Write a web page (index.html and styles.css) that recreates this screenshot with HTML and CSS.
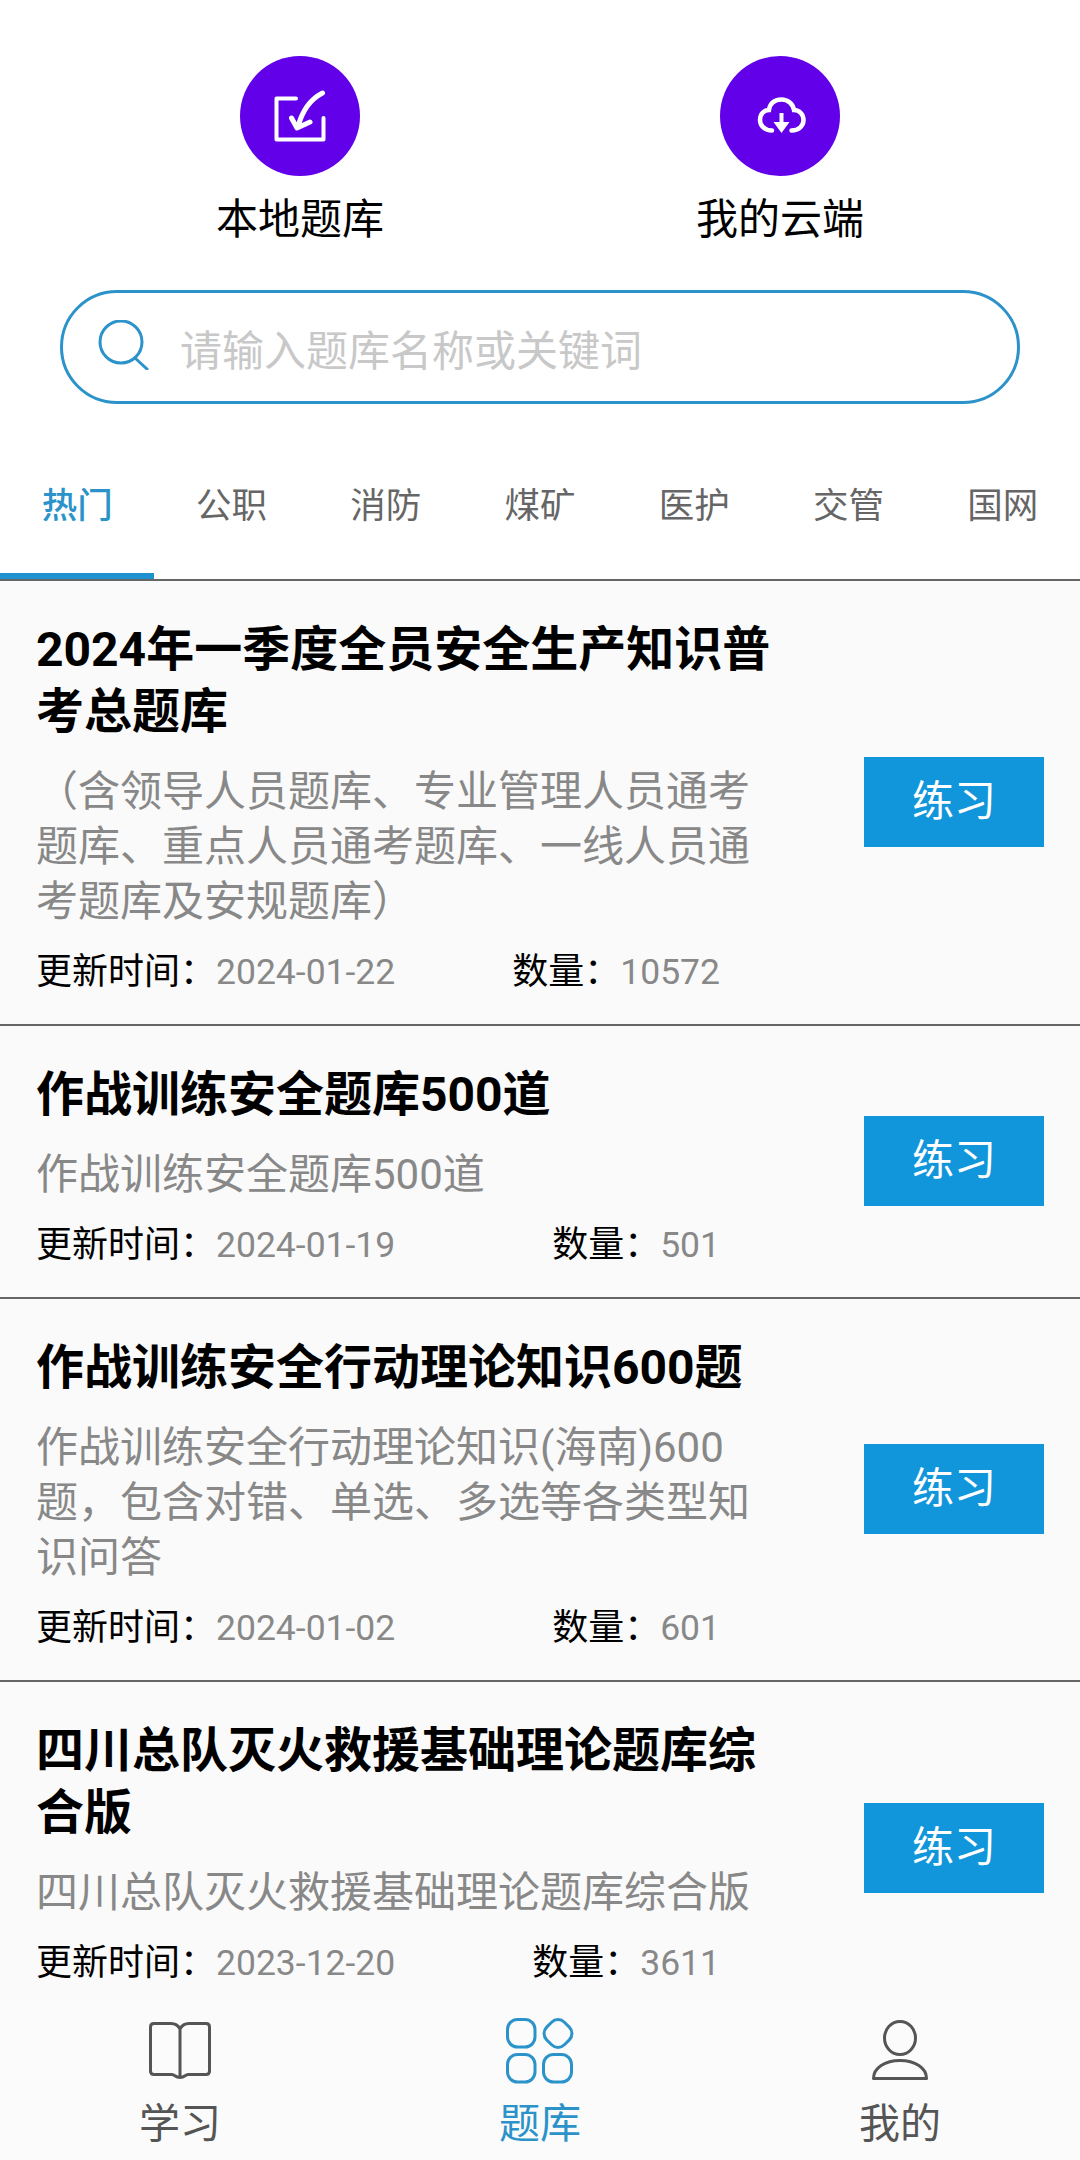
FILE: index.html
```html
<!DOCTYPE html>
<html lang="zh-CN">
<head>
    <meta name="viewport" content="width=device-width">
    <title>题库</title>
    <link rel="stylesheet" href="styles.css">
</head>
<body>
<div class="page">
    <div class="shortcuts">
        <div class="shortcut">
            <svg class="round-icon" viewBox="0 0 120 120">
                <circle cx="60" cy="60" r="60" fill="#6200ea"/>
                <path d="M56 42.5H36.5V83.5H83.5V62" fill="none" stroke="#fff" stroke-width="4" stroke-linejoin="round" stroke-linecap="round"/>
                <path d="M82.5 37C71 43 62 55 58 71M51.5 62L57 72L70 66" fill="none" stroke="#fff" stroke-width="5" stroke-linejoin="round" stroke-linecap="round"/>
            </svg>
            <div class="shortcut-name">本地题库</div>
        </div>
        <div class="shortcut">
            <svg class="round-icon" viewBox="0 0 120 120">
                <circle cx="60" cy="60" r="60" fill="#6200ea"/>
                <path d="M52 74.5C44 74.5 40 69 40 64C40 58 44 54 49 54C50 47 55 43.5 61.5 43.5C68 43.5 73 48 74 54C79.5 54 83.5 58.5 83.5 64C83.5 69.5 79 74.5 71.5 74.5" fill="none" stroke="#fff" stroke-width="4.5" stroke-linecap="round"/>
                <path d="M59.5 57H63.5V66H69.5L61.5 77L53.5 66H59.5Z" fill="#fff"/>
            </svg>
            <div class="shortcut-name">我的云端</div>
        </div>
    </div>

    <div class="search">
        <svg class="search-icon" viewBox="0 0 52 50">
            <circle cx="24" cy="22" r="21" fill="none" stroke="#2b93c9" stroke-width="3"/>
            <path d="M38 38L50 49" fill="none" stroke="#2b93c9" stroke-width="3" stroke-linecap="round"/>
        </svg>
        <span class="placeholder">请输入题库名称或关键词</span>
    </div>

    <div class="tabs">
        <div class="tab active">热门</div>
        <div class="tab">公职</div>
        <div class="tab">消防</div>
        <div class="tab">煤矿</div>
        <div class="tab">医护</div>
        <div class="tab">交管</div>
        <div class="tab">国网</div>
    </div>

    <div class="list">
        <div class="item">
            <div class="info">
                <div class="name">2024年一季度全员安全生产知识普考总题库</div>
                <div class="desc">（含领导人员题库、专业管理人员通考题库、重点人员通考题库、一线人员通考题库及安规题库）</div>
                <div class="meta">
                    <span>更新时间：<em>2024-01-22</em></span>
                    <span>数量：<em>10572</em></span>
                </div>
            </div>
            <div class="btn">练习</div>
        </div>
        <div class="item">
            <div class="info">
                <div class="name">作战训练安全题库500道</div>
                <div class="desc">作战训练安全题库500道</div>
                <div class="meta">
                    <span>更新时间：<em>2024-01-19</em></span>
                    <span>数量：<em>501</em></span>
                </div>
            </div>
            <div class="btn">练习</div>
        </div>
        <div class="item">
            <div class="info">
                <div class="name">作战训练安全行动理论知识600题</div>
                <div class="desc">作战训练安全行动理论知识(海南)600题，包含对错、单选、多选等各类型知识问答</div>
                <div class="meta">
                    <span>更新时间：<em>2024-01-02</em></span>
                    <span>数量：<em>601</em></span>
                </div>
            </div>
            <div class="btn">练习</div>
        </div>
        <div class="item">
            <div class="info">
                <div class="name">四川总队灭火救援基础理论题库综合版</div>
                <div class="desc">四川总队灭火救援基础理论题库综合版</div>
                <div class="meta">
                    <span>更新时间：<em>2023-12-20</em></span>
                    <span>数量：<em>3611</em></span>
                </div>
            </div>
            <div class="btn">练习</div>
        </div>
    </div>

    <div class="nav">
        <div class="nav-item">
            <svg class="nav-icon" viewBox="0 0 70 70">
                <path d="M35 13C33 9 30 7.5 26 7.5H9Q5.5 7.5 5.5 11V55Q5.5 58.5 9 58.5H27C30 58.5 30 61.5 35 61.5C40 61.5 40 58.5 43 58.5H61Q64.5 58.5 64.5 55V11Q64.5 7.5 61 7.5H44C40 7.5 37 9 35 13V61" fill="none" stroke="#555" stroke-width="3"/>
            </svg>
            <div>学习</div>
        </div>
        <div class="nav-item on">
            <svg class="nav-icon" viewBox="0 0 70 70">
                <rect x="2.5" y="3.5" width="27.5" height="27.5" rx="10" fill="none" stroke="#2b93c9" stroke-width="3"/>
                <rect x="40.5" y="5" width="25" height="25" rx="9" transform="rotate(45 53 17.5)" fill="none" stroke="#2b93c9" stroke-width="3"/>
                <rect x="2.5" y="38.5" width="27.5" height="27.5" rx="10" fill="none" stroke="#2b93c9" stroke-width="3"/>
                <rect x="38.5" y="38.5" width="28" height="27.5" rx="10" fill="none" stroke="#2b93c9" stroke-width="3"/>
            </svg>
            <div>题库</div>
        </div>
        <div class="nav-item">
            <svg class="nav-icon" viewBox="0 0 70 70">
                <ellipse cx="35" cy="22" rx="15.5" ry="16.5" fill="none" stroke="#555" stroke-width="3"/>
                <path d="M8.5 62.5C8.5 52 20 44.5 35 44.5C50 44.5 61.5 52 61.5 62.5Z" fill="none" stroke="#555" stroke-width="3" stroke-linejoin="round"/>
            </svg>
            <div>我的</div>
        </div>
    </div>
</div>
</body>
</html>
```

FILE: styles.css
```css
* { box-sizing: border-box; }
body {
    margin: 0;
    font-family: Roboto, "Noto Sans CJK SC", sans-serif;
    background: #fff;
}
em { font-style: normal; color: #888; }

.page {
    width: 1080px;
    height: 2160px;
    display: flex;
    flex-direction: column;
    overflow: hidden;
}

.shortcuts {
    display: flex;
    justify-content: space-around;
    padding: 56px 60px 0;
}
.shortcut { width: 240px; text-align: center; }
.round-icon { display: block; width: 120px; height: 120px; margin: 0 auto; }
.shortcut-name { font-size: 42px; line-height: 56px; margin-top: 16px; color: #000; }

.search {
    display: flex;
    align-items: center;
    margin: 42px 60px 0;
    height: 114px;
    padding-left: 34px;
    border: 3px solid #2b93c9;
    border-radius: 57px;
}
.search-icon { width: 52px; height: 50px; margin-top: -4px; }
.placeholder { font-size: 42px; color: #c8c8c8; margin-left: 31px; }

.tabs {
    display: flex;
    height: 177px;
    padding-top: 77px;
    border-bottom: 2px solid #666;
}
.tab {
    flex: 1;
    text-align: center;
    font-size: 35.5px;
    line-height: 50px;
    color: #666;
}
.tab.active { color: #2b93c9; border-bottom: 6px solid #1f90d0; font-weight: 500; }

.list { flex: 1; overflow: hidden; background: #fafafa; }
.item {
    display: flex;
    align-items: center;
    justify-content: space-between;
    padding: 38px 36px 28px 36px;
    border-bottom: 2px solid #666;
}
.info { width: 740px; }
.name { font-size: 48px; line-height: 62px; font-weight: bold; color: #000; }
.desc { font-size: 42px; line-height: 55px; margin-top: 21px; color: #888; }
.meta {
    display: flex;
    justify-content: space-between;
    width: 684px;
    margin-top: 19px;
    font-size: 36px;
    line-height: 48px;
    color: #000;
}
.meta em { font-size: 35.5px; }
.btn {
    width: 180px;
    height: 90px;
    line-height: 90px;
    margin-bottom: 12px;
    text-align: center;
    font-size: 42px;
    color: #fff;
    background: #1296db;
}

.nav {
    display: flex;
    height: 160px;
    background: #fbfbfb;
}
.nav-item {
    flex: 1;
    text-align: center;
    font-size: 41px;
    line-height: 50px;
    color: #555;
    padding-top: 16px;
}
.nav-item.on { color: #2b93c9; }
.nav-icon { display: block; width: 70px; height: 70px; margin: 0 auto 13px; }
```
